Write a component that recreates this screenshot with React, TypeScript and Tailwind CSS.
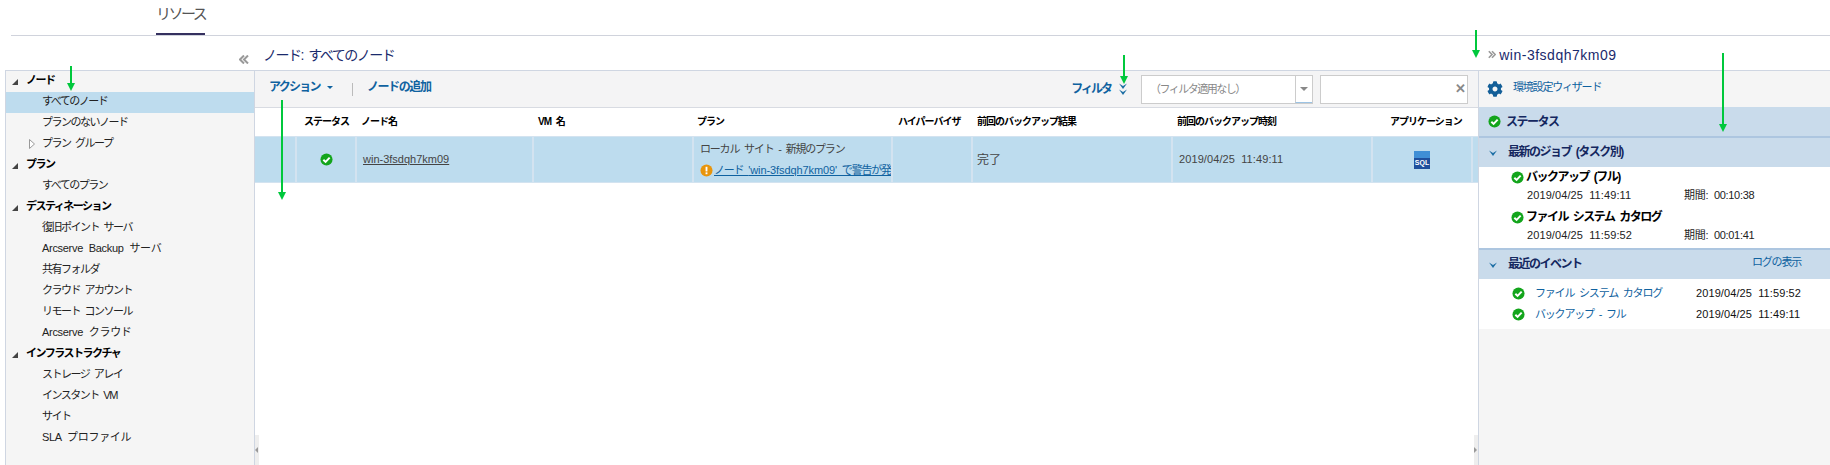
import React from "react";
import { FaCog } from "react-icons/fa";

const FONT = "font-['Liberation_Sans','Noto_Sans_CJK_JP',sans-serif] [word-spacing:3px]";

// tree items, grouped by section
const sections = [
  { title: "ノード", items: ["すべてのノード", "プランのないノード", "プラン グループ"] },
  { title: "プラン", items: ["すべてのプラン"] },
  {
    title: "デスティネーション",
    items: [
      "復旧ポイント サーバ",
      "Arcserve Backup サーバ",
      "共有フォルダ",
      "クラウド アカウント",
      "リモート コンソール",
      "Arcserve クラウド",
    ],
  },
  { title: "インフラストラクチャ", items: ["ストレージ アレイ", "インスタント VM", "サイト", "SLA プロファイル"] },
];

const columns = [
  { label: "", width: "w-[40px]", pad: "pl-[6px]" },
  { label: "ステータス", width: "w-[60px]", pad: "pl-[7px]" },
  { label: "ノード名", width: "w-[177px]", pad: "pl-[4px]" },
  { label: "VM 名", width: "w-[160px]", pad: "pl-[4px]" },
  { label: "プラン", width: "w-[199px]", pad: "pl-[3px]" },
  { label: "ハイパーバイザ", width: "w-[80px]", pad: "pl-[5px]" },
  { label: "前回のバックアップ結果", width: "w-[200px]", pad: "pl-[4px]" },
  { label: "前回のバックアップ時刻", width: "w-[200px]", pad: "pl-[4px]" },
  { label: "アプリケーション", width: "w-[100px]", pad: "pl-[17px]" },
];

function CheckIcon({ className }: { className?: string }) {
  return (
    <svg viewBox="0 0 14 14" className={className}>
      <circle cx="7" cy="7" r="6.5" fill="#13a51c" />
      <path d="M3.6 7.2 L6 9.6 L10.4 4.9" fill="none" stroke="#fff" strokeWidth="2.1" />
    </svg>
  );
}

function Expanded() {
  return (
    <svg viewBox="0 0 6 6" className="w-[6px] h-[6px]">
      <polygon points="6,0 6,6 0,6" fill="#444" />
    </svg>
  );
}

function Collapsed() {
  return (
    <svg viewBox="0 0 6 10" className="w-[6px] h-[10px]">
      <polygon points="0.5,0.5 5.5,5 0.5,9.5" fill="#fff" stroke="#999" />
    </svg>
  );
}

function DoubleChevron({ flip, className = "" }: { flip?: boolean; className?: string }) {
  return (
    <svg viewBox="0 0 10 9" className={`h-[9px] ${flip ? "rotate-180" : ""} ${className}`}>
      <path d="M5 0.5 L1 4.5 L5 8.5 M9 0.5 L5 4.5 L9 8.5" fill="none" stroke="#999" strokeWidth="2" />
    </svg>
  );
}

function ChevronDown() {
  return (
    <svg viewBox="0 0 8 6" className="w-[8px] h-[6px]">
      <path d="M0 0.5 L4 3 L8 0.5 L4 6 Z" fill="#1c6ea4" />
    </svg>
  );
}

function GreenArrow({ className }: { className: string }) {
  return (
    <div className={`absolute flex flex-col items-center ${className}`}>
      <div className="w-[2px] flex-1 bg-[#00c83c]" />
      <div className="w-0 h-0 border-x-[4px] border-x-transparent border-t-[8px] border-t-[#00c83c]" />
    </div>
  );
}

function Tree() {
  return (
    <div className="w-[250px] shrink-0 bg-[#f5f5f5] border-x border-[#cfd6e2] text-[11px] text-[#222]">
      {sections.map((s) => (
        <div key={s.title}>
          <div className="h-[21px] flex items-center pb-[3px] font-bold text-black tracking-[-1.5px]">
            <span className="ml-[6px] mr-[8px] mt-[3px] flex"><Expanded /></span>
            {s.title}
          </div>
          {s.items.map((item) => (
            <div
              key={item}
              className={`h-[21px] flex items-center pb-[3px] pl-[36px] relative ${/[A-Za-z]{3}/.test(item) ? "tracking-[-0.3px]" : "tracking-[-1.5px]"} ${item === "すべてのノード" ? "bg-[#bedcee]" : ""}`}
            >
              {item === "プラン グループ" && (
                <span className="absolute left-[23px] top-[5px] flex"><Collapsed /></span>
              )}
              {item}
            </div>
          ))}
        </div>
      ))}
    </div>
  );
}

function Cell({ width, children, className = "" }: { width: string; children?: React.ReactNode; className?: string }) {
  return <div className={`${width} shrink-0 border-r-2 border-[#d3e3f0] h-full flex items-center ${className}`}>{children}</div>;
}

function Main() {
  return (
    <div className="w-[1223px] shrink-0 flex flex-col relative">
      <div className="h-[37px] bg-[#f4f4f5] border-b border-[#d8dbe2] flex items-center pl-[14px] pr-[10px] text-[12px] text-[#0f62a0] font-bold tracking-[-1.7px]">
        <span className="-mt-[5px] flex items-center">
          アクション
          <span className="ml-[7px] mt-[2px] w-0 h-0 border-x-[3px] border-x-transparent border-t-[3px] border-t-[#0f62a0]" />
        </span>
        <span className="ml-[19px] w-px h-[13px] bg-[#bbb]" />
        <span className="ml-[14px] -mt-[5px] tracking-[-1.4px]">ノードの追加</span>
        <span className="ml-auto flex items-center tracking-[-2px]">
          フィルタ
          <span className="ml-[8px] flex flex-col text-[#3a78ad]"><ChevronDown /><ChevronDown /></span>
        </span>
        <div className="ml-[14px] w-[172px] h-[29px] bg-white border border-[#ccc] flex items-center font-normal text-[11px] text-[#888] tracking-[-1.5px]">
          <span className="flex-1 pl-[8px]">（フィルタ適用なし）</span>
          <span className="w-[17px] h-full border-l border-[#ccc] border-b border-b-[#9cc3e4] flex items-center justify-center">
            <span className="w-0 h-0 border-x-[4px] border-x-transparent border-t-[4px] border-t-[#888]" />
          </span>
        </div>
        <div className="ml-[7px] w-[148px] h-[29px] bg-white border border-[#ccc] flex items-center justify-end pr-[3px] text-[#888] text-[13px]">✕</div>
      </div>
      <div className="h-[28px] flex items-center pl-[2px] pb-[2px] text-[10px] font-bold text-black tracking-[-1px]">
        {columns.map((c) => (
          <div key={c.label} className={`${c.width} ${c.pad} shrink-0`}>{c.label}</div>
        ))}
      </div>
      <div className="h-[47px] bg-[#bddcee] border-y border-[#d3e3f0] flex pl-[2px] text-[11px] text-[#444]">
        <Cell width={columns[0].width} />
        <Cell width={columns[1].width} className="justify-center"><CheckIcon className="w-[13px] h-[13px]" /></Cell>
        <Cell width={columns[2].width} className="pl-[6px]"><span className="underline">win-3fsdqh7km09</span></Cell>
        <Cell width={columns[3].width} />
        <Cell width={columns[4].width} className="flex-col !items-start justify-center pl-[6px] gap-[5px] overflow-hidden tracking-[-1.2px]">
          <span className="whitespace-nowrap">ローカル サイト - 新規のプラン</span>
          <span className="flex items-center whitespace-nowrap text-[#0f62a0]">
            <svg viewBox="0 0 14 14" className="w-[13px] h-[13px] shrink-0 mr-[1px]">
              <circle cx="7" cy="7" r="6.5" fill="#e8950c" />
              <rect x="6" y="3" width="2" height="5" fill="#fff" />
              <rect x="6" y="9" width="2" height="2" fill="#fff" />
            </svg>
            <span className="underline">ノード <span className="tracking-[-0.1px]">'win-3fsdqh7km09'</span> で警告が発生しました</span>
          </span>
        </Cell>
        <Cell width={columns[5].width} />
        <Cell width={columns[6].width} className="pl-[4px] text-[12px]">完了</Cell>
        <Cell width={columns[7].width} className="pl-[6px] tracking-[0.1px]">2019/04/25 11:49:11</Cell>
        <Cell width={columns[8].width} className="justify-center">
          <svg viewBox="0 0 16 18" className="w-[16px] h-[18px]">
            <rect width="16" height="18" fill="#1f4f9c" />
            <rect x="0" y="0" width="16" height="7" fill="#3f8fd6" />
            <text x="8" y="14" textAnchor="middle" fontSize="7" fontWeight="bold" fill="#fff" fontFamily="Liberation Sans">SQL</text>
          </svg>
        </Cell>
      </div>
      <div className="flex-1" />
      <span className="absolute left-0 bottom-0 w-[4px] h-[30px] bg-[#eee] flex items-center">
        <span className="w-0 h-0 border-y-[3px] border-y-transparent border-r-[3px] border-r-[#999]" />
      </span>
      <span className="absolute right-0 bottom-0 w-[4px] h-[30px] bg-[#eee] flex items-center">
        <span className="w-0 h-0 border-y-[3px] border-y-transparent border-l-[3px] border-l-[#999]" />
      </span>
    </div>
  );
}

function Job({ name, date, span }: { name: string; date: string; span: string }) {
  return (
    <div className="h-[40px]">
      <div className="h-[20px] flex items-center pl-[32px] font-bold text-[12px] tracking-[-1.5px] text-black">
        <CheckIcon className="w-[13px] h-[13px] mr-[2px]" />
        {name}
      </div>
      <div className="flex h-[20px] items-center pb-[3px] pl-[48px] text-[#222]">
        <span className="w-[157px] tracking-[0.1px]">{date}</span>
        <span className="tracking-[-0.3px]">{span}</span>
      </div>
    </div>
  );
}

function Detail() {
  return (
    <div className="flex-1 flex flex-col bg-[#f5f5f5] border-l border-[#cfd6e2] text-[11px]">
      <div className="h-[36px] flex items-center pl-[8px] text-[#0f62a0] tracking-[-1.2px]">
        <FaCog className="w-[16px] h-[16px] text-[#145f98]" />
        <span className="ml-[10px] -mt-[3px]">環境設定ウィザード</span>
      </div>
      <div className="h-[31px] bg-[#c9dbeb] border-b-2 border-[#adc6e0] flex items-center pl-[9px] font-bold text-[12px] text-[#14275f] tracking-[-1.5px]">
        <CheckIcon className="w-[13px] h-[13px] mr-[5px]" />
        ステータス
      </div>
      <div className="h-[29px] bg-[#c9dbeb] flex items-center pl-[10px] font-bold text-[12px] text-[#14275f] tracking-[-1.5px]">
        <ChevronDown />
        <span className="ml-[11px] -mt-[1px]">最新のジョブ (タスク別)</span>
      </div>
      <div className="h-[81px] bg-white">
        <Job name="バックアップ (フル)" date="2019/04/25 11:49:11" span="期間: 00:10:38" />
        <Job name="ファイル システム カタログ" date="2019/04/25 11:59:52" span="期間: 00:01:41" />
      </div>
      <div className="h-[31px] bg-[#c9dbeb] border-t-2 border-[#adc6e0] flex items-center pl-[10px] font-bold text-[12px] text-[#14275f] tracking-[-1.5px]">
        <ChevronDown />
        <span className="ml-[11px] -mt-[1px]">最近のイベント</span>
        <span className="ml-auto mr-[29px] -mt-[4px] font-normal text-[11px] text-[#0f62a0] tracking-[-1.2px]">ログの表示</span>
      </div>
      <div className="h-[50px] bg-white pt-[4px]">
        {[
          ["ファイル システム カタログ", "2019/04/25 11:59:52"],
          ["バックアップ - フル", "2019/04/25 11:49:11"],
        ].map(([name, date]) => (
          <div key={name} className="h-[21px] flex items-center pl-[33px]">
            <CheckIcon className="w-[13px] h-[13px] mr-[10px]" />
            <span className="w-[161px] text-[#0f62a0] tracking-[-1.2px]">{name}</span>
            <span className="text-[#111] tracking-[0.1px]">{date}</span>
          </div>
        ))}
      </div>
      <div className="flex-1" />
    </div>
  );
}

export default function App() {
  return (
    <div className={`relative w-[1830px] h-[465px] overflow-hidden bg-white ${FONT}`}>
      <div className="ml-[11px] h-[36px] border-b border-[#d0d3dc] flex">
        <div className="ml-[145px] w-[49px] h-[35px] pb-[5px] border-b-2 border-[#35305f] flex items-center whitespace-nowrap text-[15px] text-[#555] tracking-[-2.5px]">
          リソース
        </div>
      </div>
      <div className="h-[34px] pt-[5px] flex items-center text-[14px] text-[#1a2a6c]">
        <span className="ml-[239px] mt-[8px] flex"><DoubleChevron className="w-[10px]" /></span>
        <span className="ml-[14px] tracking-[-1.5px]">ノード: すべてのノード</span>
        <span className="ml-[1094px] -mt-[2px] flex"><DoubleChevron flip className="w-[8px]" /></span>
        <span className="ml-[3px] tracking-[0.5px]">win-3fsdqh7km09</span>
      </div>
      <div className="h-[395px] ml-[5px] flex border-t border-[#cfd6e2]">
        <Tree />
        <Main />
        <Detail />
      </div>
      {/* green annotation arrows */}
      <GreenArrow className="left-[67px] top-[66px] w-[8px] h-[25px]" />
      <GreenArrow className="left-[278px] top-[100px] w-[8px] h-[100px]" />
      <GreenArrow className="left-[1120px] top-[55px] w-[8px] h-[29px]" />
      <GreenArrow className="left-[1472px] top-[30px] w-[8px] h-[28px]" />
      <GreenArrow className="left-[1719px] top-[53px] w-[8px] h-[79px]" />
    </div>
  );
}
